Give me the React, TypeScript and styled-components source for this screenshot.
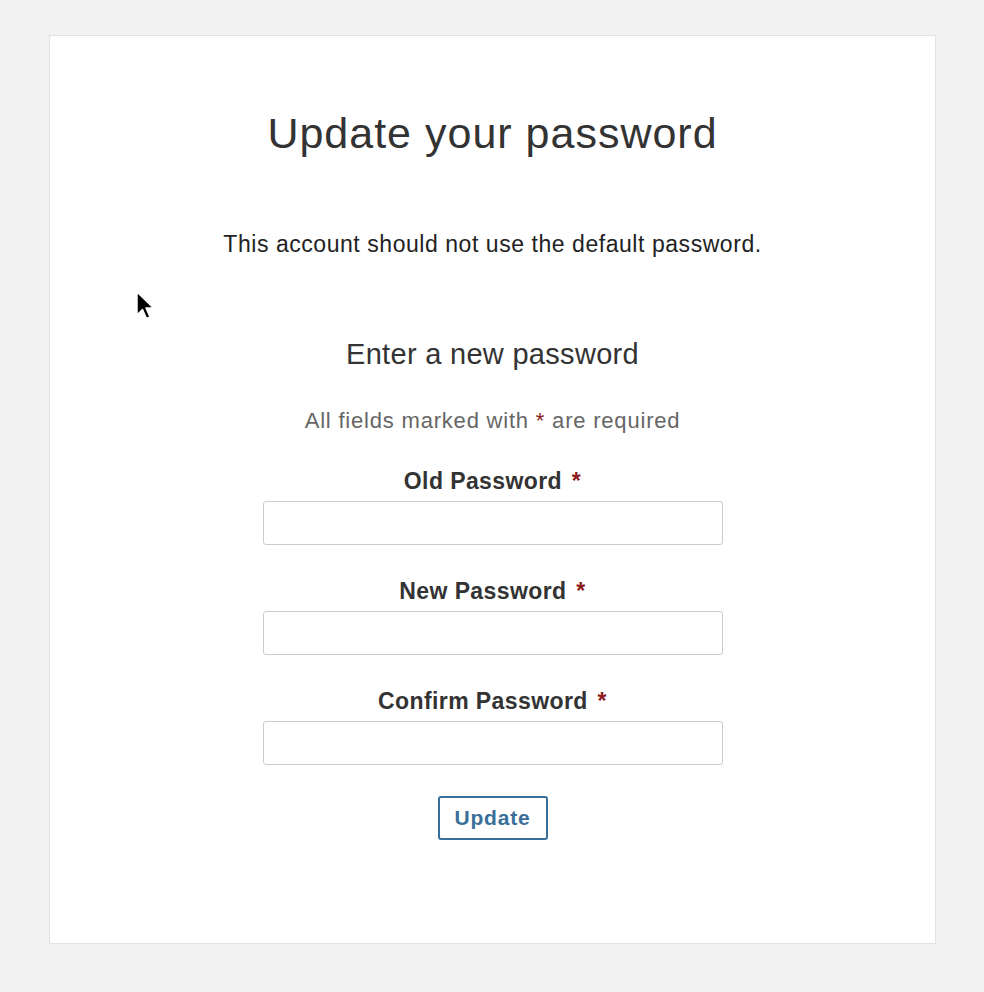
import React from "react";
import styled, { createGlobalStyle } from "styled-components";

const Global = createGlobalStyle`
  html, body { margin: 0; padding: 0; background: #f2f2f2; }
  body { font-family: "Liberation Sans", Arial, Helvetica, sans-serif; color: #333; }
  * { box-sizing: border-box; }
`;

const Page = styled.div`
  position: relative;
  padding: 35px 48px 48px 49px;
  min-height: 992px;
`;

const Card = styled.main`
  background: #fff;
  border: 1px solid #e2e2e2;
  height: 909px;
  display: flex;
  flex-direction: column;
  align-items: center;
  padding-top: 72px;
`;

const Title = styled.h1`
  margin: 0;
  font-size: 43px;
  font-weight: 400;
  line-height: 50px;
  letter-spacing: 1px;
  color: #333;
`;

const Notice = styled.p`
  margin: 72px 0 0;
  font-size: 23px;
  line-height: 28px;
  letter-spacing: 0.55px;
  color: #222;
`;

const SubTitle = styled.h2`
  margin: 79px 0 0;
  font-size: 29px;
  font-weight: 400;
  line-height: 34px;
  letter-spacing: 0.3px;
  color: #333;
`;

const Hint = styled.p`
  margin: 37px 0 0;
  font-size: 22px;
  line-height: 26px;
  letter-spacing: 0.8px;
  color: #666;
`;

const Star = styled.span`
  color: #8b1a1a;
  font-weight: 400;
`;

const LabelStar = styled(Star)`
  font-weight: 700;
  margin-left: 3px;
`;

const Form = styled.form`
  display: flex;
  flex-direction: column;
  align-items: center;
  margin-top: 33px;
`;

const Field = styled.div<{ $first?: boolean }>`
  display: flex;
  flex-direction: column;
  align-items: center;
  margin-top: ${(p) => (p.$first ? "0" : "32px")};
`;

const Label = styled.label`
  font-size: 23px;
  font-weight: 700;
  line-height: 28px;
  letter-spacing: 0.4px;
  color: #333;
  margin-bottom: 6px;
`;

const Input = styled.input`
  width: 460px;
  height: 44px;
  border: 1px solid #cccccc;
  border-radius: 3px;
  background: #fff;
  font-size: 18px;
  padding: 0 10px;
`;

const Button = styled.button`
  margin-top: 31px;
  width: 110px;
  height: 44px;
  background: #fff;
  border: 2px solid #3a6f9a;
  border-radius: 3px;
  color: #3a6f9a;
  font-family: "Liberation Sans", Arial, sans-serif;
  font-size: 21px;
  font-weight: 700;
  letter-spacing: 0.8px;
`;

const Cursor = styled.svg`
  position: absolute;
  left: 136px;
  top: 291px;
`;

export default function App() {
  return (
    <>
      <Global />
      <Page>
        <Card>
          <Title>Update your password</Title>
          <Notice>This account should not use the default password.</Notice>
          <SubTitle>Enter a new password</SubTitle>
          <Hint>
            All fields marked with <Star>*</Star> are required
          </Hint>
          <Form onSubmit={(e) => e.preventDefault()}>
            <Field $first>
              <Label>
                Old Password <LabelStar>*</LabelStar>
              </Label>
              <Input type="password" />
            </Field>
            <Field>
              <Label>
                New Password <LabelStar>*</LabelStar>
              </Label>
              <Input type="password" />
            </Field>
            <Field>
              <Label>
                Confirm Password <LabelStar>*</LabelStar>
              </Label>
              <Input type="password" />
            </Field>
            <Button type="submit">Update</Button>
          </Form>
        </Card>
        <Cursor width="20" height="32" viewBox="0 0 20 32">
          <path d="M1 1 L1 24 L6.5 18.5 L10.5 27.5 L14 26 L10 17 L17.5 17 Z" fill="#000" stroke="#fff" strokeWidth="1.5" strokeLinejoin="round" />
        </Cursor>
      </Page>
    </>
  );
}
